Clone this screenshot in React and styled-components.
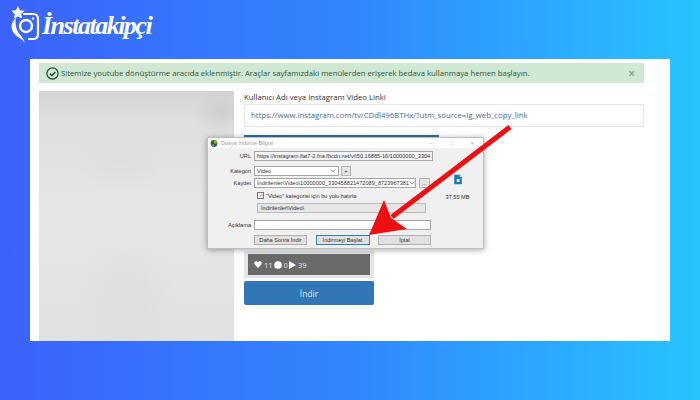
import React from 'react'
import styled, { createGlobalStyle } from 'styled-components'

const GlobalStyle = createGlobalStyle`
  html, body {
    margin: 0;
    padding: 0;
  }
  * {
    box-sizing: border-box;
  }
`

const Logo = () => (
  <LogoWrap>
    <svg width="32" height="38" viewBox="0 0 32 38" fill="none">
      <polygon points="10,0 12,4.2 16.6,4.8 13.2,8 14.1,12.6 10,10.4 5.9,12.6 6.8,8 3.4,4.8 8,4.2" fill="#fff" />
      <path d="M16 8 H25 Q30 8 30 13 V28 Q30 33 25 33 H21" stroke="#fff" strokeWidth="2.2" strokeLinecap="round" />
      <circle cx="18" cy="20" r="6" stroke="#fff" strokeWidth="2.4" />
      <circle cx="25" cy="12.5" r="1.2" fill="#fff" />
      <path d="M8 12 C2.5 16 2 24 7.5 29 C11 32 14 33 16.5 36.5 C15.5 31 11.5 29 9.5 25 C7.5 21 7 16 8 12 Z" fill="#fff" />
    </svg>
    <LogoText>İnstatakipçi</LogoText>
  </LogoWrap>
)

const CheckIcon = () => (
  <svg width="13" height="13" viewBox="0 0 13 13" fill="none" stroke="#1f4a2a" strokeWidth="1.2">
    <circle cx="6.5" cy="6.5" r="5.6" />
    <path d="M3.8 6.6 L5.8 8.6 L9.4 4.9" strokeWidth="1.4" />
  </svg>
)

const Arrow = () => (
  <ArrowSvg width="170" height="125" viewBox="0 0 170 125">
    <line x1="158" y1="3" x2="40" y2="93" stroke="#ee0f12" strokeWidth="5" />
    <polygon points="17,111 32,76 39,94 55,105" fill="#ee0f12" />
  </ArrowSvg>
)

const Chevron = () => (
  <ChevronSvg width="6" height="4" viewBox="0 0 6 4" fill="none" stroke="#777" strokeWidth="0.8">
    <path d="M0.5 0.5 L3 3 L5.5 0.5" />
  </ChevronSvg>
)

const AppIcon = () => (
  <svg width="8" height="7" viewBox="0 0 8 7">
    <circle cx="4" cy="3.5" r="3.4" fill="#2d5f33" />
    <path d="M4 0.2 A3.4 3.4 0 0 1 7.4 3.5 H4 Z" fill="#8db43c" />
    <path d="M1 4 A3.4 3.4 0 0 0 4 6.9 V4 Z" fill="#4c86b8" />
  </svg>
)

const FileGlyph = () => (
  <svg width="10" height="11" viewBox="0 0 11 13">
    <path d="M1 1 H7.5 L10 3.5 V12 H1 Z" fill="#1c77bd" />
    <path d="M7.5 1 L10 3.5 H7.5 Z" fill="#cfe3f3" />
    <rect x="4" y="6" width="3.4" height="3.6" fill="#e8f3fb" />
  </svg>
)

const Heart = () => (
  <svg width="8" height="7" viewBox="0 0 10 9" fill="#fff">
    <path d="M5 9 L0.8 4.6 C-0.6 2.8 0.4 0.3 2.6 0.3 C3.6 0.3 4.5 0.9 5 1.7 C5.5 0.9 6.4 0.3 7.4 0.3 C9.6 0.3 10.6 2.8 9.2 4.6 Z" />
  </svg>
)

const Bubble = () => (
  <svg width="8" height="8" viewBox="0 0 10 10" fill="#fff">
    <circle cx="5" cy="5" r="4.8" />
  </svg>
)

const PlayMark = () => (
  <svg width="7" height="8" viewBox="0 0 9 10" fill="#fff">
    <polygon points="0,0 9,5 0,10" />
  </svg>
)

const App = () => (
  <>
    <GlobalStyle />
    <Page>
      <Header>
        <Logo />
      </Header>
      <Panel>
        <Alert>
          <CheckIcon />
          <AlertText>Sitemize youtube dönüştürme aracıda eklenmiştir. Araçlar sayfamızdaki menülerden erişerek bedava kullanmaya hemen başlayın.</AlertText>
          <AlertClose>×</AlertClose>
        </Alert>
        <Content>
          <Preview />
          <FormColumn>
            <FieldLabel>Kullanıcı Adı veya Instagram Video Linki</FieldLabel>
            <LinkInput>https://www.instagram.com/tv/CDdl496BTHx/?utm_source=ig_web_copy_link</LinkInput>
            <SubmitBar />
            <ResultColumn>
              <StatsFrame>
                <Stats>
                  <Heart /><span>11</span>
                  <Bubble /><span>0</span>
                  <PlayMark /><span>39</span>
                </Stats>
              </StatsFrame>
              <DownloadButton>İndir</DownloadButton>
            </ResultColumn>
          </FormColumn>
        </Content>
      </Panel>

      <Dialog>
        <TitleBar>
          <AppIcon />
          <TitleText>Dosya İndirme Bilgisi</TitleText>
          <WindowControls>
            <span>–</span><span>□</span><span>×</span>
          </WindowControls>
        </TitleBar>
        <DialogBody>
          <DialogForm>
            <DialogRow $top={3}>
              <RowLabel>URL</RowLabel>
              <TextBox>https://instagram.flat7-2.fna.fbcdn.net/v/t50.16885-16/10000000_3304</TextBox>
            </DialogRow>
            <DialogRow $top={5}>
              <RowLabel>Kategori</RowLabel>
              <SelectBox $width={85}>Video<Chevron /></SelectBox>
              <SmallButton>+</SmallButton>
            </DialogRow>
            <DialogRow $top={2}>
              <RowLabel>Kaydet</RowLabel>
              <SelectBox $width={162}>İndirilenler\Video\10000000_330458821472089_8723967381<Chevron /></SelectBox>
              <SmallButton $wide>...</SmallButton>
            </DialogRow>
            <CheckRow>
              <CheckBox>✓</CheckBox>
              <span>"Video" kategorisi için bu yolu hatırla</span>
            </CheckRow>
            <PathBox>İndirilenler\Video\</PathBox>
            <DialogRow $top={7}>
              <RowLabel>Açıklama</RowLabel>
              <TextBox $white />
            </DialogRow>
            <DialogActions>
              <DialogButton $width={53}>Daha Sonra İndir</DialogButton>
              <DialogButton $width={54} $primary>İndirmeyi Başlat</DialogButton>
              <DialogButton $width={53}>İptal</DialogButton>
            </DialogActions>
          </DialogForm>
          <FileInfo>
            <FileGlyph />
            <span>37,55 MB</span>
          </FileInfo>
        </DialogBody>
      </Dialog>
      <Arrow />
    </Page>
  </>
)

const Page = styled.div`
  position: relative;
  width: 700px;
  height: 400px;
  overflow: hidden;
  padding: 0 30px;
  background: linear-gradient(90deg, #3b62fb 0%, #3187fd 50%, #27c3ff 100%);
  font-family: "Open Sans", "Liberation Sans", sans-serif;
`

const Header = styled.header`
  height: 59px;
  margin-left: -22px;
  padding-top: 6px;
`

const LogoWrap = styled.div`
  display: flex;
  align-items: flex-start;
  gap: 2px;
  height: 40px;
`

const LogoText = styled.span`
  margin-top: 5px;
  font-family: "Liberation Serif", serif;
  font-style: italic;
  font-weight: 700;
  font-size: 26px;
  line-height: 30px;
  letter-spacing: -1.5px;
  color: #fff;
`

const Panel = styled.main`
  width: 640px;
  height: 282px;
  padding: 4px 26px 0 9px;
  background: #fff;
`

const Alert = styled.div`
  display: flex;
  align-items: center;
  gap: 2px;
  height: 20px;
  padding: 0 9px 0 7px;
  background: #d0e7d4;
  color: #2f5a3a;
`

const AlertText = styled.span`
  flex: 1;
  font-size: 7.75px;
  white-space: nowrap;
`

const AlertClose = styled.span`
  font-size: 12px;
  font-weight: 700;
  color: #8fa795;
`

const Content = styled.div`
  display: flex;
  gap: 10px;
  margin-top: 8px;
`

const Preview = styled.div`
  flex: none;
  width: 195px;
  height: 250px;
  background:
    radial-gradient(ellipse 30px 22px at 94% 9%, rgba(190, 190, 190, 0.45), transparent),
    radial-gradient(ellipse 50px 60px at 45% 82%, rgba(205, 205, 205, 0.22), transparent),
    radial-gradient(ellipse 45px 35px at 42% 28%, rgba(205, 205, 205, 0.2), transparent),
    linear-gradient(180deg, #d3d3d3 0%, #dfdfdf 12%, #e6e6e6 50%, #e1e1e1 100%);
`

const FormColumn = styled.div`
  flex: 1;
  display: flex;
  flex-direction: column;
`

const FieldLabel = styled.label`
  height: 13px;
  font-size: 7.75px;
  line-height: 12px;
  color: #333;
`

const LinkInput = styled.div`
  height: 23px;
  padding: 0 6px;
  border: 1px solid #e3e6ea;
  font-size: 7.75px;
  line-height: 21px;
  color: #3f6c9f;
  white-space: nowrap;
`

const SubmitBar = styled.div`
  width: 195px;
  height: 10px;
  margin-top: 8px;
  background: #2e6da8;
`

const ResultColumn = styled.div`
  display: flex;
  flex-direction: column;
  width: 130px;
  margin-top: 106px;
`

const StatsFrame = styled.div`
  height: 27px;
  padding: 3px 4px;
  background: #e3e6e9;
`

const Stats = styled.div`
  display: flex;
  align-items: center;
  gap: 2px;
  height: 21px;
  padding-left: 6px;
  background: #6a6a6a;
  color: #e4e4e4;
  font-size: 7.5px;

  span {
    margin-right: -1px;
  }
`

const DownloadButton = styled.div`
  display: flex;
  align-items: center;
  justify-content: center;
  height: 24px;
  margin-top: 3px;
  border-radius: 2px;
  background: #3176b5;
  color: #dbe8f5;
  font-size: 8.5px;
`

const Dialog = styled.section`
  position: absolute;
  left: 207px;
  top: 137px;
  width: 277px;
  height: 112px;
  border: 1px solid #bdbdbd;
  background: #f0f0f0;
  box-shadow: 0 1px 6px rgba(0, 0, 0, 0.35);
  font-family: "Liberation Sans", sans-serif;
  color: #333;
  font-size: 5.6px;
`

const TitleBar = styled.div`
  display: flex;
  align-items: center;
  gap: 3px;
  height: 10px;
  padding: 0 9px 0 2px;
  background: #fff;
  color: #999;
`

const TitleText = styled.span`
  flex: 1;
`

const WindowControls = styled.div`
  display: flex;
  gap: 17px;
  font-size: 6px;
  color: #aaa;
`

const DialogBody = styled.div`
  display: flex;
`

const DialogForm = styled.div`
  flex: none;
  width: 224px;
  display: flex;
  flex-direction: column;
  padding-left: 5px;
  padding-right: 1px;
`

const DialogRow = styled.div`
  display: flex;
  align-items: center;
  gap: 3px;
  height: 10px;
  margin-top: ${p => p.$top}px;
`

const RowLabel = styled.span`
  flex: none;
  width: 38px;
  text-align: right;
`

const TextBox = styled.div`
  flex: 1;
  height: 10px;
  padding: 0 2px;
  border: 1px solid #a5a5a5;
  background: ${p => (p.$white ? '#fff' : '#f4f4f4')};
  line-height: 8px;
  white-space: nowrap;
`

const SelectBox = styled.div`
  display: flex;
  align-items: center;
  justify-content: space-between;
  flex: none;
  width: ${p => p.$width}px;
  height: 10px;
  padding: 0 2px;
  border: 1px solid #a5a5a5;
  background: #fff;
  white-space: nowrap;
`

const ChevronSvg = styled.svg`
  flex: none;
`

const SmallButton = styled.div`
  flex: none;
  width: ${p => (p.$wide ? 11 : 10)}px;
  height: 10px;
  margin-left: ${p => (p.$wide ? 0 : -1)}px;
  border: 1px solid #b5b5b5;
  background: #e4e4e4;
  text-align: center;
  line-height: 8px;
`

const CheckRow = styled.div`
  display: flex;
  align-items: center;
  gap: 2px;
  height: 9px;
  margin: 3px 0 0 44px;
`

const CheckBox = styled.span`
  width: 7px;
  height: 7px;
  border: 1px solid #777;
  background: #fff;
  font-size: 5px;
  line-height: 5px;
  text-align: center;
`

const PathBox = styled.div`
  width: 169px;
  height: 10px;
  margin: 3px 0 0 44px;
  padding-left: 3px;
  border: 1px solid #bbb;
  background: #e6e6e6;
  line-height: 8px;
`

const DialogActions = styled.div`
  display: flex;
  justify-content: space-between;
  margin: 5px 0 0 41px;
`

const DialogButton = styled.div`
  width: ${p => p.$width}px;
  height: 10px;
  border: 1px solid ${p => (p.$primary ? '#2f7fc4' : '#b0b0b0')};
  background: #e1e1e1;
  text-align: center;
  line-height: 8px;
`

const FileInfo = styled.div`
  flex: 1;
  display: flex;
  flex-direction: column;
  align-items: center;
  gap: 9px;
  padding-top: 26px;
`

const ArrowSvg = styled.svg`
  position: absolute;
  left: 352px;
  top: 124px;
`

export default App
